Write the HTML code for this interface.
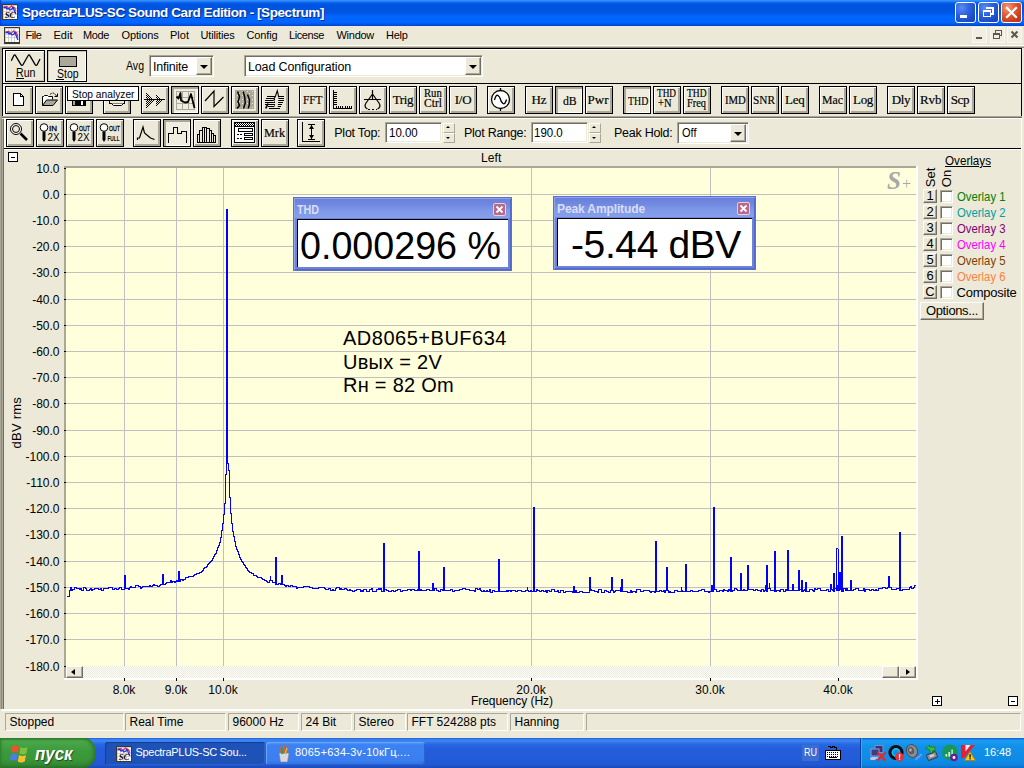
<!DOCTYPE html>
<html><head><meta charset="utf-8"><title>SpectraPLUS</title><style>
*{box-sizing:border-box;margin:0;padding:0}
html,body{width:1024px;height:768px;overflow:hidden;background:#ece9d8;font-family:"Liberation Sans",sans-serif;font-size:13px;color:#000}
.a{position:absolute}
.t{position:absolute;white-space:nowrap;line-height:1}
.btn{position:absolute;width:28px;height:28px;border:1px solid #000;background:#ece9d8;box-shadow:inset 1px 1px 0 #fff,inset -2px -2px 0 #aca899}
.btn.p{box-shadow:inset 2px 2px 0 #aca899,inset -1px -1px 0 #fff;background:#efede0}
.btn svg{position:absolute;left:0;top:0}
.btn .s{position:absolute;left:0;top:0;width:26px;height:26px;text-align:center;font-family:"Liberation Serif",serif;font-size:13px;line-height:26px;white-space:nowrap;letter-spacing:0}
.btn .s2{position:absolute;left:0;top:2px;width:26px;text-align:center;font-family:"Liberation Serif",serif;font-size:11px;line-height:10px;white-space:nowrap}
.sunk{position:absolute;background:#fff;border:1px solid;border-color:#aca899 #fff #fff #aca899;box-shadow:inset 1px 1px 0 #716f64,inset -1px -1px 0 #ece9d8}
.dd{position:absolute;background:#ece9d8;border:1px solid;border-color:#fff #716f64 #716f64 #fff;box-shadow:inset -1px -1px 0 #aca899}
.dd:after{content:"";position:absolute;left:50%;top:50%;margin:-1px 0 0 -4px;border:4px solid transparent;border-top-color:#000;border-bottom:0}
.sp{position:absolute;border:1px solid #aca899;background:#ece9d8}
.yl{position:absolute;right:964.5px;white-space:nowrap;line-height:12px;height:12px;font-size:12px}
.xl{position:absolute;top:683.5px;width:60px;text-align:center;line-height:12px;font-size:12px}
.st{position:absolute;top:713px;height:18px;border:1px solid;border-color:#aca899 #fff #fff #aca899;padding-left:3.5px;line-height:16px;font-size:12px;white-space:nowrap}
.ov{position:absolute;left:956px;font-size:13px;line-height:14px;white-space:nowrap;letter-spacing:-0.3px}
.sb{position:absolute;left:923px;width:14px;height:14px;border:1px solid;border-color:#fff #716f64 #716f64 #fff;box-shadow:inset -1px -1px 0 #aca899;font-size:13px;line-height:12px;text-align:center}
.cb{position:absolute;left:940px;width:13px;height:13px;background:#fff;border:1px solid;border-color:#aca899 #fff #fff #aca899;box-shadow:inset 1px 1px 0 #716f64,inset -1px -1px 0 #ece9d8}
.mini{position:absolute;width:10px;height:10px;border:1px solid #000;background:#fff}
</style></head><body>
<div class="a" style="left:0;top:0;width:1024px;height:26px;background:linear-gradient(to bottom,#3d95ff 0,#2a85fb 4%,#0a64ee 10%,#0055e0 16%,#0054e0 45%,#005cee 55%,#0066ff 62%,#0066ff 86%,#0058ee 92%,#0044d0 100%)"></div>
<div class="t" style="left:22px;top:6px;font-size:13.5px;font-weight:bold;color:#fff;text-shadow:1px 1px 0 #0a2a80;letter-spacing:-0.43px" id="ttl">SpectraPLUS-SC Sound Card Edition - [Spectrum]</div>
<svg class="a" style="left:2px;top:4px" width="16" height="16" viewBox="0 0 16 16" shape-rendering="crispEdges"><rect width="16" height="16" fill="#3c3a30"/><rect x="1" y="1" width="14" height="14" fill="#d0d0d0"/><rect x="2" y="2" width="2" height="2" fill="#fff"/><rect x="2" y="5" width="2" height="2" fill="#fff"/><rect x="2" y="8" width="2" height="2" fill="#fff"/><rect x="2" y="11" width="2" height="2" fill="#fff"/><rect x="2" y="13" width="2" height="2" fill="#fff"/><rect x="5" y="2" width="2" height="2" fill="#fff"/><rect x="5" y="5" width="2" height="2" fill="#fff"/><rect x="5" y="8" width="2" height="2" fill="#fff"/><rect x="5" y="11" width="2" height="2" fill="#fff"/><rect x="5" y="13" width="2" height="2" fill="#fff"/><rect x="8" y="2" width="2" height="2" fill="#fff"/><rect x="8" y="5" width="2" height="2" fill="#fff"/><rect x="8" y="8" width="2" height="2" fill="#fff"/><rect x="8" y="11" width="2" height="2" fill="#fff"/><rect x="8" y="13" width="2" height="2" fill="#fff"/><rect x="11" y="2" width="2" height="2" fill="#fff"/><rect x="11" y="5" width="2" height="2" fill="#fff"/><rect x="11" y="8" width="2" height="2" fill="#fff"/><rect x="11" y="11" width="2" height="2" fill="#fff"/><rect x="11" y="13" width="2" height="2" fill="#fff"/><rect x="13" y="2" width="2" height="2" fill="#fff"/><rect x="13" y="5" width="2" height="2" fill="#fff"/><rect x="13" y="8" width="2" height="2" fill="#fff"/><rect x="13" y="11" width="2" height="2" fill="#fff"/><rect x="13" y="13" width="2" height="2" fill="#fff"/><polyline points="1.500,3 5,2.500 6,4 8,3.500 9.500,2 11,4 12.500,3.500 14,7" fill="none" stroke="#f03040" stroke-width="1.200" shape-rendering="auto"/><polyline points="1.500,3.500 4,3.500 5,5 7,4.500 8,6 10,5 11,3 12.500,7 14,10" fill="none" stroke="#2030f0" stroke-width="1.300" shape-rendering="auto"/><text x="2.800" y="14.300" font-family="Liberation Serif" font-style="italic" font-weight="bold" font-size="8.500" fill="#000" shape-rendering="auto" textLength="10.500" lengthAdjust="spacingAndGlyphs">SC</text></svg>
<div class="a" style="left:0;top:0;width:2px;height:26px;background:linear-gradient(to right,#0838c8,rgba(8,56,200,0))"></div>
<div class="a" style="left:955px;top:2px;width:21px;height:21px;border:1px solid #fff;border-radius:3px;background:radial-gradient(circle at 30% 25%,#5a8cf5 0,#2c62e0 40%,#1a48c4 80%,#1640b8 100%)"><div class="a" style="left:4px;top:12px;width:7px;height:3px;background:#fff"></div></div><div class="a" style="left:978px;top:2px;width:21px;height:21px;border:1px solid #fff;border-radius:3px;background:radial-gradient(circle at 30% 25%,#5a8cf5 0,#2c62e0 40%,#1a48c4 80%,#1640b8 100%)"><svg class="a" style="left:0;top:0" width="19" height="19" shape-rendering="crispEdges"><path d="M7 4.5h7v1M13.5 5v5.5h-1.5" fill="none" stroke="#fff" stroke-width="2"/><rect x="4.5" y="8" width="7" height="5.5" fill="none" stroke="#fff" stroke-width="1"/><rect x="4" y="7" width="8" height="2" fill="#fff"/></svg></div><div class="a" style="left:1001px;top:2px;width:21px;height:21px;border:1px solid #fff;border-radius:3px;background:radial-gradient(circle at 30% 25%,#f0a080 0,#e0603c 35%,#c83a18 75%,#b03010 100%)"><svg class="a" style="left:0;top:0" width="19" height="19"><path d="M5 5l9 9M14 5l-9 9" stroke="#fff" stroke-width="2.2" stroke-linecap="square"/></svg></div>
<svg class="a" style="left:4px;top:27px" width="16" height="17" viewBox="0 0 16 17" shape-rendering="crispEdges"><rect width="16" height="17" fill="#3c3a30"/><rect x="1" y="1" width="14" height="14" fill="#d0d0d0"/><rect x="2" y="2" width="2" height="2" fill="#fff"/><rect x="2" y="5" width="2" height="2" fill="#fff"/><rect x="2" y="8" width="2" height="2" fill="#fff"/><rect x="2" y="11" width="2" height="2" fill="#fff"/><rect x="2" y="13" width="2" height="2" fill="#fff"/><rect x="5" y="2" width="2" height="2" fill="#fff"/><rect x="5" y="5" width="2" height="2" fill="#fff"/><rect x="5" y="8" width="2" height="2" fill="#fff"/><rect x="5" y="11" width="2" height="2" fill="#fff"/><rect x="5" y="13" width="2" height="2" fill="#fff"/><rect x="8" y="2" width="2" height="2" fill="#fff"/><rect x="8" y="5" width="2" height="2" fill="#fff"/><rect x="8" y="8" width="2" height="2" fill="#fff"/><rect x="8" y="11" width="2" height="2" fill="#fff"/><rect x="8" y="13" width="2" height="2" fill="#fff"/><rect x="11" y="2" width="2" height="2" fill="#fff"/><rect x="11" y="5" width="2" height="2" fill="#fff"/><rect x="11" y="8" width="2" height="2" fill="#fff"/><rect x="11" y="11" width="2" height="2" fill="#fff"/><rect x="11" y="13" width="2" height="2" fill="#fff"/><rect x="13" y="2" width="2" height="2" fill="#fff"/><rect x="13" y="5" width="2" height="2" fill="#fff"/><rect x="13" y="8" width="2" height="2" fill="#fff"/><rect x="13" y="11" width="2" height="2" fill="#fff"/><rect x="13" y="13" width="2" height="2" fill="#fff"/><polyline points="1.500,5 5,4.500 6,6 8,5.500 9.500,4 11,6 12.500,5.500 14,10" fill="none" stroke="#f03040" stroke-width="1.200" shape-rendering="auto"/><polyline points="1.500,5.500 4,5.500 5,7 7,6.500 8,8 10,7 11,5 12.500,9.500 14,13" fill="none" stroke="#2030f0" stroke-width="1.300" shape-rendering="auto"/></svg>
<div class="t" style="left:25.5px;top:30px;font-size:11px;letter-spacing:-0.431px;font-family:'Liberation Sans',sans-serif;color:#000;">File</div>
<div class="t" style="left:53.5px;top:30px;font-size:11px;letter-spacing:0.011px;font-family:'Liberation Sans',sans-serif;color:#000;">Edit</div>
<div class="t" style="left:83px;top:30px;font-size:11px;letter-spacing:-0.379px;font-family:'Liberation Sans',sans-serif;color:#000;">Mode</div>
<div class="t" style="left:121.5px;top:30px;font-size:11px;letter-spacing:-0.130px;font-family:'Liberation Sans',sans-serif;color:#000;">Options</div>
<div class="t" style="left:170px;top:30px;font-size:11px;letter-spacing:0.011px;font-family:'Liberation Sans',sans-serif;color:#000;">Plot</div>
<div class="t" style="left:200.5px;top:30px;font-size:11px;letter-spacing:-0.161px;font-family:'Liberation Sans',sans-serif;color:#000;">Utilities</div>
<div class="t" style="left:246.5px;top:30px;font-size:11px;letter-spacing:-0.133px;font-family:'Liberation Sans',sans-serif;color:#000;">Config</div>
<div class="t" style="left:289px;top:30px;font-size:11px;letter-spacing:-0.416px;font-family:'Liberation Sans',sans-serif;color:#000;">License</div>
<div class="t" style="left:336.5px;top:30px;font-size:11px;letter-spacing:-0.270px;font-family:'Liberation Sans',sans-serif;color:#000;">Window</div>
<div class="t" style="left:386px;top:30px;font-size:11px;letter-spacing:-0.280px;font-family:'Liberation Sans',sans-serif;color:#000;">Help</div>
<div class="a" style="left:972px;top:27px;width:15px;height:16px;border:1px solid #f8f7f0;background:#f1efe4"><div class="a" style="left:3px;top:9px;width:6px;height:2px;background:#5a584c"></div></div>
<div class="a" style="left:990px;top:27px;width:15px;height:16px;border:1px solid #f8f7f0;background:#f1efe4"><svg class="a" style="left:0;top:0" width="13" height="13" shape-rendering="crispEdges"><path d="M4.5 4.5v-2h6v5h-2" fill="none" stroke="#5a584c"/><rect x="4" y="2" width="7" height="1" fill="#5a584c"/><rect x="2.5" y="5.500" width="6" height="5" fill="none" stroke="#5a584c"/><rect x="2" y="5" width="7" height="2" fill="#5a584c"/></svg></div>
<div class="a" style="left:1007px;top:27px;width:15px;height:16px;border:1px solid #f8f7f0;background:#f1efe4"><svg class="a" style="left:0;top:0" width="13" height="13"><path d="M3.5 3.500l6 6M9.500 3.500l-6 6" stroke="#5a584c" stroke-width="2"/></svg></div>
<div class="a" style="left:0;top:45px;width:1024px;height:1px;background:#fff"></div>
<div class="a" style="left:0;top:46px;width:1024px;height:1px;background:#c5c2b2"></div>
<div class="a" style="left:0;top:47px;width:1024px;height:1px;background:#8e8b7c"></div>
<div class="a" style="left:0;top:47px;width:2px;height:662px;background:#aca899"></div>
<div class="a" style="left:1px;top:119px;width:1px;height:590px;background:#8e8b7c"></div>
<div class="a" style="left:2px;top:119px;width:1px;height:590px;background:#aca899"></div>
<div class="a" style="left:3px;top:119px;width:1px;height:590px;background:#716f64"></div>
<div class="a" style="left:2px;top:48px;width:1020px;height:36px;border:1px solid #000;box-shadow:inset 2px 1px 0 #fffdf0"></div>
<div class="a" style="left:2px;top:84px;width:1020px;height:32px;border-left:1px solid #000;border-right:1px solid #000;box-shadow:inset 2px 0 0 #fffdf0"></div>
<div class="a" style="left:2px;top:116px;width:1020px;height:1px;background:#aca899"></div>
<div class="a" style="left:2px;top:117px;width:1020px;height:1px;background:#716f64"></div>
<div class="a" style="left:4px;top:118px;width:1018px;height:1px;background:#fff"></div>
<div class="a" style="left:4px;top:119px;width:2px;height:29px;background:#fffdf0"></div>
<div class="a" style="left:4px;top:148px;width:1017px;height:1px;background:#000"></div>
<div class="a" style="left:4px;top:149px;width:1017px;height:1px;background:#fff"></div>
<div class="a" style="left:1021px;top:119px;width:1px;height:592px;background:#fff"></div>
<div class="btn" style="left:5px;top:50px;width:40px;height:32px;box-shadow:inset 1px 1px 0 #fff,inset -1px -1px 0 #c8c5b2"><svg style="left:-1px;top:-1px" width="40" height="32"><path d="M6.300 10.800 L8.700 5.800 Q9.700 3.800 10.700 5.800 L15.800 14.300 Q17 16.300 18.200 14.300 L23 5.800 Q24 3.800 25 5.800 L30 14.300 Q31.200 16.300 32.400 14.300 L35 9" fill="none" stroke="#000" stroke-width="1.300" stroke-linejoin="round"/></svg></div>
<div class="t" style="left:16px;top:67px;font-size:12px;letter-spacing:0.000px;font-family:'Liberation Sans',sans-serif;color:#000;transform:scaleX(0.8813);transform-origin:0 0;">Run</div>
<div class="a" style="left:16px;top:78px;width:8px;height:1px;background:#000"></div>
<div class="btn p" style="left:47px;top:50px;width:40px;height:32px;box-shadow:inset 1px 1px 0 #c8c5b2,inset -1px -1px 0 #fff"><div class="a" style="left:11px;top:5px;width:18px;height:11px;border:1px solid #000;background:#aca899"></div></div>
<div class="t" style="left:56.5px;top:68px;font-size:12px;letter-spacing:0.000px;font-family:'Liberation Sans',sans-serif;color:#000;transform:scaleX(0.8750);transform-origin:0 0;">Stop</div>
<div class="a" style="left:56px;top:79px;width:8px;height:1px;background:#000"></div>
<div class="t" style="left:126.4px;top:60px;font-size:12.5px;letter-spacing:0.000px;font-family:'Liberation Sans',sans-serif;color:#000;transform:scaleX(0.8446);transform-origin:0 0;">Avg</div>
<div class="sunk" style="left:149px;top:55px;width:65px;height:22px"><div class="dd" style="left:46px;top:1px;width:16px;height:18px"></div></div>
<div class="sunk" style="left:244px;top:55px;width:239px;height:22px"><div class="dd" style="left:220px;top:1px;width:16px;height:18px"></div></div>
<div class="t" style="left:153px;top:61px;font-size:12.5px;letter-spacing:-0.229px;font-family:'Liberation Sans',sans-serif;color:#000;">Infinite</div>
<div class="t" style="left:248px;top:61px;font-size:12.5px;letter-spacing:-0.146px;font-family:'Liberation Sans',sans-serif;color:#000;">Load Configuration</div>
<div class="btn" style="left:5px;top:86px"><svg style="left:-1px;top:-1px" width="28" height="28" viewBox="0 0 28 28"><path d="M8.5 7.500h7l3 3v9h-10z" fill="#fff" stroke="#000" shape-rendering="crispEdges"/><path d="M15.5 7.500v3h3" stroke="#000" fill="none" shape-rendering="crispEdges"/></svg></div>
<div class="btn" style="left:35px;top:86px"><svg style="left:-1px;top:-1px" width="28" height="28" viewBox="0 0 28 28"><path d="M7.5 19.500v-9h1l1-1h3l1 1h4v3" fill="#fff" stroke="#000" stroke-width="1"/><path d="M7.5 19.500l4-5.500h11l-4.500 5.500z" fill="#aca899" stroke="#000"/><path d="M15 8.500q3.500-3.500 6.500 1.500" stroke="#000" fill="none" stroke-dasharray="2 1"/><path d="M19.500 10.500h3v-3" stroke="#000" fill="none"/></svg></div>
<div class="btn" style="left:65px;top:86px"><svg style="left:-1px;top:-1px" width="28" height="28" viewBox="0 0 28 28"><rect x="7.500" y="7.500" width="13" height="12" fill="#000" stroke="#000" shape-rendering="crispEdges"/><rect x="10" y="8" width="8" height="5" fill="#fff" shape-rendering="crispEdges"/><rect x="8" y="15" width="2" height="4" fill="#aca899" shape-rendering="crispEdges"/><rect x="16" y="15" width="2" height="4" fill="#fff" shape-rendering="crispEdges"/></svg></div>
<div class="btn" style="left:103px;top:86px"><svg style="left:-1px;top:-1px" width="28" height="28" viewBox="0 0 28 28"><path d="M9.500 12.500v-5h9v5" fill="#fff" stroke="#000" shape-rendering="crispEdges"/><rect x="6.500" y="12.500" width="15" height="5" fill="#ece9d8" stroke="#000" shape-rendering="crispEdges"/><path d="M8.500 17.500l2 2h8l2-2" fill="#fff" stroke="#000"/><rect x="17" y="14" width="2" height="1" fill="#aca899"/></svg></div>
<div class="btn" style="left:141px;top:86px"><svg style="left:-1px;top:-1px" width="28" height="28" viewBox="0 0 28 28"><defs><pattern id="chk" width="2" height="2" patternUnits="userSpaceOnUse"><rect width="1" height="1" fill="#000"/><rect x="1" y="1" width="1" height="1" fill="#000"/></pattern><pattern id="chk2" width="2" height="2" patternUnits="userSpaceOnUse"><rect width="2" height="2" fill="#aca899"/><rect width="1" height="1" fill="#ece9d8"/></pattern></defs><g shape-rendering="crispEdges"><path d="M5 5v18l8-9z" fill="url(#chk)"/><path d="M15 7v14l6-7z" fill="url(#chk)"/><rect x="3" y="13" width="21" height="1" fill="#000"/></g></svg></div>
<div class="btn p" style="left:171px;top:86px"><svg style="left:-1px;top:-1px" width="28" height="28" viewBox="0 0 28 28"><g shape-rendering="crispEdges"><rect x="5" y="5" width="1" height="19" fill="#aca899"/><rect x="5" y="5" width="19" height="1" fill="#aca899"/><rect x="11" y="5" width="1" height="19" fill="#aca899"/><rect x="5" y="11" width="19" height="1" fill="#aca899"/><rect x="17" y="5" width="1" height="19" fill="#aca899"/><rect x="5" y="17" width="19" height="1" fill="#aca899"/><rect x="23" y="5" width="1" height="19" fill="#aca899"/><rect x="5" y="23" width="19" height="1" fill="#aca899"/></g><path d="M5.500 10.500l2 2 2-5.500.5 7.500 4 2 3-.5 3-8 1.500 6 2 8" stroke="#000" fill="none" stroke-width="1.800" stroke-linejoin="round"/></svg></div>
<div class="btn" style="left:201px;top:86px"><svg style="left:-1px;top:-1px" width="28" height="28" viewBox="0 0 28 28"><path d="M4 15l9-10v15.500l9.500-9.500" stroke="#000" fill="none" stroke-width="1.200"/></svg></div>
<div class="btn" style="left:231px;top:86px"><svg style="left:-1px;top:-1px" width="28" height="28" viewBox="0 0 28 28"><defs><pattern id="wf" width="5" height="4" patternUnits="userSpaceOnUse"><rect width="5" height="4" fill="#aca899"/><rect x="1" y="1" width="1" height="1" fill="#ece9d8"/><rect x="3" y="3" width="1" height="1" fill="#ece9d8"/></pattern></defs><rect x="4" y="4" width="19" height="19" fill="url(#wf)" shape-rendering="crispEdges"/><path d="M6.500 5.500l2 5-1.500 5.500 1.500 3.500-2.500 3M12.200 5.500l1.500 5.500.5 6-1.700 5.500M16.500 8.500l2 5-.3 6-1.200 3" stroke="#000" fill="none" stroke-width="1.500" stroke-linejoin="round"/></svg></div>
<div class="btn" style="left:261px;top:86px"><svg style="left:-1px;top:-1px" width="28" height="28" viewBox="0 0 28 28"><g shape-rendering="crispEdges"><rect x="6" y="10" width="17" height="1" fill="#000"/><rect x="5" y="12" width="18" height="1" fill="#000"/><rect x="4" y="14" width="18.5" height="1" fill="#000"/><rect x="4" y="16" width="18" height="1" fill="#000"/><rect x="4" y="18" width="17" height="1" fill="#000"/><rect x="7" y="20" width="12.5" height="1" fill="#000"/><rect x="7.5" y="22" width="11.5" height="1" fill="#000"/></g><path d="M13 21.500l-.3-9 1.800-2.500 1.800-5.300.8 3.300.5 3 -1 11z" fill="#ece9d8"/><path d="M12.700 13.500l1.800-3.500 1.800-5.300.8 3.300.6 3.500" stroke="#000" fill="none" stroke-width="1.100"/><path d="M13.500 13v8" stroke="#000" stroke-width="1" stroke-dasharray="1.500 1"/><path d="M4.800 22.500l2.200-5" stroke="#000" stroke-width="1.800"/></svg></div>
<div class="btn" style="left:299px;top:86px"></div><div class="t" style="left:302.6px;top:93.08px;font-size:13px;letter-spacing:0.000px;font-family:'Liberation Serif',serif;color:#000;transform:scaleX(0.8705);transform-origin:0 0;-webkit-text-stroke:0.18px #000;">FFT</div>
<div class="btn" style="left:329px;top:86px"><svg style="left:-1px;top:-1px" width="28" height="28" viewBox="0 0 28 28"><g shape-rendering="crispEdges"><rect x="4" y="4" width="1" height="19" fill="#000"/><rect x="4" y="22" width="19" height="1" fill="#000"/><rect x="22" y="20" width="1" height="3" fill="#000"/><rect x="5" y="6" width="3" height="1" fill="#000"/><rect x="7" y="20" width="1" height="3" fill="#000"/><rect x="5" y="8" width="3" height="1" fill="#000"/><rect x="9" y="20" width="1" height="3" fill="#000"/><rect x="5" y="10" width="3" height="1" fill="#000"/><rect x="11" y="20" width="1" height="3" fill="#000"/><rect x="5" y="12" width="3" height="1" fill="#000"/><rect x="13" y="20" width="1" height="3" fill="#000"/><rect x="5" y="14" width="3" height="1" fill="#000"/><rect x="16" y="20" width="1" height="3" fill="#000"/><rect x="5" y="16" width="3" height="1" fill="#000"/><rect x="18" y="20" width="1" height="3" fill="#000"/><rect x="5" y="18" width="3" height="1" fill="#000"/><rect x="20" y="20" width="1" height="3" fill="#000"/></g></svg></div>
<div class="btn" style="left:359px;top:86px"><svg style="left:-1px;top:-1px" width="28" height="28" viewBox="0 0 28 28"><path d="M13.500 4v10M5 13.500h17M13.500 8l-6.500 9q-2.500 4 1.500 6M13.500 8l6.500 9q2.500 4-1.500 6" stroke="#000" fill="none" stroke-width="1.200"/><path d="M9 23.500h9" stroke="#000" fill="none" stroke-dasharray="2 2"/></svg></div>
<div class="btn" style="left:389px;top:86px"></div><div class="t" style="left:392.8px;top:93.08px;font-size:13px;letter-spacing:-0.407px;font-family:'Liberation Serif',serif;color:#000;-webkit-text-stroke:0.18px #000;">Trig</div>
<div class="btn" style="left:419px;top:86px"></div><div class="t" style="left:424.1px;top:87.84px;font-size:11.5px;letter-spacing:0.000px;font-family:'Liberation Serif',serif;color:#000;transform:scaleX(0.9285);transform-origin:0 0;-webkit-text-stroke:0.18px #000;">Run</div><div class="t" style="left:424.1px;top:98.14px;font-size:11.5px;letter-spacing:-0.023px;font-family:'Liberation Serif',serif;color:#000;-webkit-text-stroke:0.18px #000;">Ctrl</div>
<div class="btn" style="left:449px;top:86px"></div><div class="t" style="left:454.8px;top:93.08px;font-size:13px;letter-spacing:-0.277px;font-family:'Liberation Serif',serif;color:#000;-webkit-text-stroke:0.18px #000;">I/O</div>
<div class="btn" style="left:487px;top:86px"><svg style="left:-1px;top:-1px" width="28" height="28" viewBox="0 0 28 28"><circle cx="13.500" cy="13.500" r="9" fill="#fff" stroke="#000" stroke-width="1.300"/><path d="M13.500 2v3M13.500 22v3" stroke="#000" stroke-width="1.300"/><path d="M7.500 14q1.500-6 3.500-4.500t2.500 4 2.500 4 3.500-4" stroke="#000" fill="none" stroke-width="1.300"/></svg></div>
<div class="btn" style="left:525px;top:86px"></div><div class="t" style="left:531.5px;top:93.08px;font-size:13px;letter-spacing:-0.079px;font-family:'Liberation Serif',serif;color:#000;-webkit-text-stroke:0.18px #000;">Hz</div>
<div class="btn p" style="left:555px;top:86px"></div><div class="t" style="left:562.8px;top:94.08px;font-size:13px;letter-spacing:0.000px;font-family:'Liberation Serif',serif;color:#000;transform:scaleX(0.9031);transform-origin:0 0;-webkit-text-stroke:0.18px #000;">dB</div>
<div class="btn" style="left:585px;top:86px"></div><div class="t" style="left:587.5px;top:93.08px;font-size:13px;letter-spacing:0.018px;font-family:'Liberation Serif',serif;color:#000;-webkit-text-stroke:0.18px #000;">Pwr</div>
<div class="btn p" style="left:623px;top:86px"></div><div class="t" style="left:628px;top:94.08px;font-size:13px;letter-spacing:0.000px;font-family:'Liberation Serif',serif;color:#000;transform:scaleX(0.7599);transform-origin:0 0;-webkit-text-stroke:0.18px #000;">THD</div>
<div class="btn" style="left:653px;top:86px"></div><div class="t" style="left:656.5px;top:87.84px;font-size:11.5px;letter-spacing:0.000px;font-family:'Liberation Serif',serif;color:#000;transform:scaleX(0.8039);transform-origin:0 0;-webkit-text-stroke:0.18px #000;">THD</div><div class="t" style="left:658px;top:98.14px;font-size:11.5px;letter-spacing:0.000px;font-family:'Liberation Serif',serif;color:#000;transform:scaleX(0.9127);transform-origin:0 0;-webkit-text-stroke:0.18px #000;">+N</div>
<div class="btn" style="left:683px;top:86px"></div><div class="t" style="left:686.7px;top:87.84px;font-size:11.5px;letter-spacing:0.000px;font-family:'Liberation Serif',serif;color:#000;transform:scaleX(0.8251);transform-origin:0 0;-webkit-text-stroke:0.18px #000;">THD</div><div class="t" style="left:687px;top:98.14px;font-size:11.5px;letter-spacing:0.000px;font-family:'Liberation Serif',serif;color:#000;transform:scaleX(0.9013);transform-origin:0 0;-webkit-text-stroke:0.18px #000;">Freq</div>
<div class="btn" style="left:721px;top:86px"></div><div class="t" style="left:724.5px;top:93.08px;font-size:13px;letter-spacing:0.000px;font-family:'Liberation Serif',serif;color:#000;transform:scaleX(0.8229);transform-origin:0 0;-webkit-text-stroke:0.18px #000;">IMD</div>
<div class="btn" style="left:751px;top:86px"></div><div class="t" style="left:753.4px;top:93.08px;font-size:13px;letter-spacing:0.000px;font-family:'Liberation Serif',serif;color:#000;transform:scaleX(0.8700);transform-origin:0 0;-webkit-text-stroke:0.18px #000;">SNR</div>
<div class="btn" style="left:781px;top:86px"></div><div class="t" style="left:785px;top:93.08px;font-size:13px;letter-spacing:-0.170px;font-family:'Liberation Serif',serif;color:#000;-webkit-text-stroke:0.18px #000;">Leq</div>
<div class="btn" style="left:819px;top:86px"></div><div class="t" style="left:822px;top:93.08px;font-size:13px;letter-spacing:0.000px;font-family:'Liberation Serif',serif;color:#000;transform:scaleX(0.9091);transform-origin:0 0;-webkit-text-stroke:0.18px #000;">Mac</div>
<div class="btn" style="left:849px;top:86px"></div><div class="t" style="left:853px;top:93.08px;font-size:13px;letter-spacing:-0.314px;font-family:'Liberation Serif',serif;color:#000;-webkit-text-stroke:0.18px #000;">Log</div>
<div class="btn" style="left:887px;top:86px"></div><div class="t" style="left:891.8px;top:93.08px;font-size:13px;letter-spacing:-0.400px;font-family:'Liberation Serif',serif;color:#000;-webkit-text-stroke:0.18px #000;">Dly</div>
<div class="btn" style="left:917px;top:86px"></div><div class="t" style="left:920px;top:93.08px;font-size:13px;letter-spacing:-0.090px;font-family:'Liberation Serif',serif;color:#000;-webkit-text-stroke:0.18px #000;">Rvb</div>
<div class="btn" style="left:947px;top:86px"></div><div class="t" style="left:950.7px;top:93.08px;font-size:13px;letter-spacing:-0.400px;font-family:'Liberation Serif',serif;color:#000;-webkit-text-stroke:0.18px #000;">Scp</div>
<div class="a" style="left:67px;top:86px;width:72px;height:15px;border:1px solid #000;background:#fff"></div>
<div class="t" style="left:72px;top:89px;font-size:11.5px;letter-spacing:0.000px;font-family:'Liberation Sans',sans-serif;color:#000;transform:scaleX(0.8888);transform-origin:0 0;">Stop analyzer</div>
<div class="btn" style="left:6px;top:119px"><svg style="left:-1px;top:-1px" width="28" height="28" viewBox="0 0 28 28"><circle cx="10" cy="10" r="5.500" fill="#fff" stroke="#000"/><circle cx="10" cy="10" r="3.500" fill="#ece9d8" stroke="#000"/><path d="M14.500 14.500l6.500 6.500" stroke="#000" stroke-width="2.600"/></svg></div>
<div class="btn" style="left:36px;top:119px"><svg style="left:-1px;top:-1px" width="28" height="28" viewBox="0 0 28 28"><circle cx="8" cy="8.500" r="3.800" fill="#fff" stroke="#000"/><path d="M6.500 12.500h3v8l-1.500 2.500-1.500-2.500z" fill="#000"/><text x="13" y="11.500" font-family="Liberation Sans" font-size="8" textLength="8" lengthAdjust="spacingAndGlyphs" stroke="#000" stroke-width=".3">IN</text><text x="11.500" y="22" font-family="Liberation Sans" font-size="11" textLength="12" lengthAdjust="spacingAndGlyphs">2X</text></svg></div>
<div class="btn" style="left:66px;top:119px"><svg style="left:-1px;top:-1px" width="28" height="28" viewBox="0 0 28 28"><circle cx="8" cy="8.500" r="3.800" fill="#fff" stroke="#000"/><path d="M6.500 12.500h3v8l-1.500 2.500-1.500-2.500z" fill="#000"/><text x="13" y="11.500" font-family="Liberation Sans" font-size="8" textLength="11" lengthAdjust="spacingAndGlyphs" stroke="#000" stroke-width=".3">OUT</text><text x="11.500" y="22" font-family="Liberation Sans" font-size="11" textLength="12" lengthAdjust="spacingAndGlyphs">2X</text></svg></div>
<div class="btn" style="left:96px;top:119px"><svg style="left:-1px;top:-1px" width="28" height="28" viewBox="0 0 28 28"><circle cx="8" cy="8.500" r="3.800" fill="#fff" stroke="#000"/><path d="M6.500 12.500h3v8l-1.500 2.500-1.500-2.500z" fill="#000"/><text x="13" y="11.500" font-family="Liberation Sans" font-size="8" textLength="11" lengthAdjust="spacingAndGlyphs" stroke="#000" stroke-width=".3">OUT</text><text x="11.500" y="22" font-family="Liberation Sans" font-size="7.500" font-weight="bold" textLength="12" lengthAdjust="spacingAndGlyphs">FULL</text></svg></div>
<div class="btn" style="left:133px;top:119px"><svg style="left:-1px;top:-1px" width="28" height="28" viewBox="0 0 28 28"><path d="M4.500 21v-2h2l3.500-11 1.500 6 3 2.500 3 2.500 4 1.500" stroke="#000" fill="none" stroke-width="1.200"/></svg></div>
<div class="btn p" style="left:163px;top:119px"><svg style="left:-1px;top:-1px" width="28" height="28" viewBox="0 0 28 28"><path d="M5.500 23.500v-9h4.500v-6h4.500v6h4v-2h4.500v11" stroke="#000" fill="none" shape-rendering="crispEdges"/></svg></div>
<div class="btn" style="left:193px;top:119px"><svg style="left:-1px;top:-1px" width="28" height="28" viewBox="0 0 28 28"><g shape-rendering="crispEdges"><rect x="4.5" y="15.5" width="2.300" height="8" fill="none" stroke="#000"/><rect x="6.8" y="11.5" width="2.300" height="12" fill="none" stroke="#000"/><rect x="9.1" y="8.5" width="2.300" height="15" fill="none" stroke="#000"/><rect x="11.4" y="8.5" width="2.300" height="15" fill="none" stroke="#000"/><rect x="13.7" y="9.5" width="2.300" height="14" fill="none" stroke="#000"/><rect x="16" y="11.5" width="2.300" height="12" fill="none" stroke="#000"/><rect x="18.3" y="14.5" width="2.300" height="9" fill="none" stroke="#000"/><rect x="20.6" y="16.5" width="2.300" height="7" fill="none" stroke="#000"/></g></svg></div>
<div class="btn" style="left:231px;top:119px"><svg style="left:-1px;top:-1px" width="28" height="28" viewBox="0 0 28 28"><g shape-rendering="crispEdges"><rect x="3.500" y="3.500" width="20" height="20" fill="#fff" stroke="#000"/><rect x="4" y="4" width="19" height="3" fill="url(#chk)"/><rect x="3" y="7" width="21" height="1" fill="#000"/><rect x="7.500" y="9.500" width="14" height="3" fill="#fff" stroke="#000"/><rect x="13.500" y="14.500" width="8" height="2" fill="#fff" stroke="#000"/><rect x="13.500" y="18.500" width="8" height="2" fill="#fff" stroke="#000"/><rect x="6" y="15" width="2" height="1" fill="#000"/><rect x="9" y="15" width="2" height="1" fill="#000"/><rect x="6" y="19" width="2" height="1" fill="#000"/><rect x="9" y="19" width="2" height="1" fill="#000"/></g></svg></div>
<div class="btn" style="left:261px;top:119px"></div><div class="t" style="left:263.5px;top:126.08px;font-size:13px;letter-spacing:0.000px;font-family:'Liberation Serif',serif;color:#000;transform:scaleX(0.9380);transform-origin:0 0;-webkit-text-stroke:0.18px #000;">Mrk</div>
<div class="btn" style="left:297px;top:119px"><svg style="left:-1px;top:-1px" width="28" height="28" viewBox="0 0 28 28"><g shape-rendering="crispEdges"><path d="M5.500 3v19.500h17" stroke="#000" fill="none"/><path d="M11 5.500h7M11 20.500h7M14.500 6v14" stroke="#000" fill="none"/></g><path d="M14.500 6l-2.500 4h5zM14.500 20l-2.500-4h5z" fill="#000"/></svg></div>
<div class="t" style="left:334.3px;top:127px;font-size:12.5px;letter-spacing:-0.268px;font-family:'Liberation Sans',sans-serif;color:#000;">Plot Top:</div>
<div class="sunk" style="left:385px;top:122px;width:57px;height:21px"></div>
<div class="sp2" id="sp1"></div>
<div class="t" style="left:464px;top:127px;font-size:12.5px;letter-spacing:-0.256px;font-family:'Liberation Sans',sans-serif;color:#000;">Plot Range:</div>
<div class="sunk" style="left:531px;top:122px;width:57px;height:21px"></div>
<div class="t" style="left:614px;top:127px;font-size:12.5px;letter-spacing:-0.264px;font-family:'Liberation Sans',sans-serif;color:#000;">Peak Hold:</div>
<div class="sunk" style="left:677px;top:122px;width:72px;height:22px"><div class="dd" style="left:52px;top:1px;width:16px;height:18px"></div></div>
<div class="a" style="left:443px;top:123px;width:12px;height:10px;background:#ece9d8;border:1px solid;border-color:#fff #aca899 #aca899 #fff"><div class="a" style="left:2px;top:2px;border:2.5px solid transparent;border-bottom:2.5px solid #000;border-top:0"></div></div>
<div class="a" style="left:443px;top:133px;width:12px;height:10px;background:#ece9d8;border:1px solid;border-color:#fff #aca899 #aca899 #fff"><div class="a" style="left:2px;top:3px;border:2.5px solid transparent;border-top:2.5px solid #000;border-bottom:0"></div></div>
<div class="a" style="left:589px;top:123px;width:12px;height:10px;background:#ece9d8;border:1px solid;border-color:#fff #aca899 #aca899 #fff"><div class="a" style="left:2px;top:2px;border:2.5px solid transparent;border-bottom:2.5px solid #000;border-top:0"></div></div>
<div class="a" style="left:589px;top:133px;width:12px;height:10px;background:#ece9d8;border:1px solid;border-color:#fff #aca899 #aca899 #fff"><div class="a" style="left:2px;top:3px;border:2.5px solid transparent;border-top:2.5px solid #000;border-bottom:0"></div></div>
<div class="t" style="left:388.5px;top:127px;font-size:12.5px;letter-spacing:0.000px;font-family:'Liberation Sans',sans-serif;color:#000;transform:scaleX(0.9191);transform-origin:0 0;">10.00</div>
<div class="t" style="left:534.4px;top:127px;font-size:12.5px;letter-spacing:0.000px;font-family:'Liberation Sans',sans-serif;color:#000;transform:scaleX(0.9191);transform-origin:0 0;">190.0</div>
<div class="t" style="left:681.5px;top:127px;font-size:12.5px;letter-spacing:0.000px;font-family:'Liberation Sans',sans-serif;color:#000;transform:scaleX(0.8818);transform-origin:0 0;">Off</div>
<div class="mini" style="left:8px;top:152px"><div class="a" style="left:2px;top:4px;width:4px;height:1px;background:#000"></div></div>
<div class="t" style="left:481px;top:152px;font-size:12px;letter-spacing:0.121px;font-family:'Liberation Sans',sans-serif;color:#000;">Left</div>
<div class="a" style="left:64px;top:166px;width:854px;height:514px;background:#fff"></div>
<div class="a" style="left:64px;top:166px;width:852px;height:512px;background:#aca899"></div>
<div class="a" style="left:66px;top:168px;width:850px;height:498px;background:#ffffdc"></div>
<svg class="a" style="left:0;top:0" width="1024" height="768" shape-rendering="crispEdges"><rect x="66" y="194" width="850" height="1" fill="#c0c0c0"/><rect x="66" y="220" width="850" height="1" fill="#c0c0c0"/><rect x="66" y="246" width="850" height="1" fill="#c0c0c0"/><rect x="66" y="272" width="850" height="1" fill="#c0c0c0"/><rect x="66" y="299" width="850" height="1" fill="#c0c0c0"/><rect x="66" y="325" width="850" height="1" fill="#c0c0c0"/><rect x="66" y="351" width="850" height="1" fill="#c0c0c0"/><rect x="66" y="377" width="850" height="1" fill="#c0c0c0"/><rect x="66" y="403" width="850" height="1" fill="#c0c0c0"/><rect x="66" y="430" width="850" height="1" fill="#c0c0c0"/><rect x="66" y="456" width="850" height="1" fill="#c0c0c0"/><rect x="66" y="482" width="850" height="1" fill="#c0c0c0"/><rect x="66" y="508" width="850" height="1" fill="#c0c0c0"/><rect x="66" y="534" width="850" height="1" fill="#c0c0c0"/><rect x="66" y="561" width="850" height="1" fill="#c0c0c0"/><rect x="66" y="587" width="850" height="1" fill="#c0c0c0"/><rect x="66" y="613" width="850" height="1" fill="#c0c0c0"/><rect x="66" y="639" width="850" height="1" fill="#c0c0c0"/><rect x="124" y="168" width="1" height="498" fill="#c0c0c0"/><rect x="124" y="678" width="1" height="3" fill="#000"/><rect x="176" y="168" width="1" height="498" fill="#c0c0c0"/><rect x="176" y="678" width="1" height="3" fill="#000"/><rect x="223" y="168" width="1" height="498" fill="#c0c0c0"/><rect x="223" y="678" width="1" height="3" fill="#000"/><rect x="531" y="168" width="1" height="498" fill="#c0c0c0"/><rect x="531" y="678" width="1" height="3" fill="#000"/><rect x="710" y="168" width="1" height="498" fill="#c0c0c0"/><rect x="710" y="678" width="1" height="3" fill="#000"/><rect x="838" y="168" width="1" height="498" fill="#c0c0c0"/><rect x="838" y="678" width="1" height="3" fill="#000"/><rect x="64" y="168" width="2" height="1" fill="#000"/><rect x="64" y="194" width="2" height="1" fill="#000"/><rect x="64" y="220" width="2" height="1" fill="#000"/><rect x="64" y="246" width="2" height="1" fill="#000"/><rect x="64" y="272" width="2" height="1" fill="#000"/><rect x="64" y="299" width="2" height="1" fill="#000"/><rect x="64" y="325" width="2" height="1" fill="#000"/><rect x="64" y="351" width="2" height="1" fill="#000"/><rect x="64" y="377" width="2" height="1" fill="#000"/><rect x="64" y="403" width="2" height="1" fill="#000"/><rect x="64" y="430" width="2" height="1" fill="#000"/><rect x="64" y="456" width="2" height="1" fill="#000"/><rect x="64" y="482" width="2" height="1" fill="#000"/><rect x="64" y="508" width="2" height="1" fill="#000"/><rect x="64" y="534" width="2" height="1" fill="#000"/><rect x="64" y="561" width="2" height="1" fill="#000"/><rect x="64" y="587" width="2" height="1" fill="#000"/><rect x="64" y="613" width="2" height="1" fill="#000"/><rect x="64" y="639" width="2" height="1" fill="#000"/><rect x="64" y="666" width="2" height="1" fill="#000"/><path d="M66.5 596.5H67.5V596.5H68.5V596.5H69.5V590.5H70.5V587.5H71.5V590.5H72.5V589.5H73.5V589.5H74.5V587.5H75.5V587.5H76.5V588.5H77.5V588.5H78.5V588.5H79.5V589.5H80.5V588.5H81.5V590.5H82.5V590.5H83.5V587.5H84.5V587.5H85.5V588.5H86.5V590.5H87.5V590.5H88.5V590.5H89.5V589.5H90.5V588.5H91.5V590.5H92.5V589.5H93.5V589.5H94.5V588.5H95.5V588.5H96.5V588.5H97.5V588.5H98.5V589.5H99.5V589.5H100.5V588.5H101.5V590.5H102.5V590.5H103.5V588.5H104.5V588.5H105.5V588.5H106.5V588.5H107.5V588.5H108.5V587.5H109.5V587.5H110.5V587.5H111.5V587.5H112.5V589.5H113.5V589.5H114.5V588.5H115.5V588.5H116.5V589.5H117.5V589.5H118.5V588.5H119.5V587.5H120.5V587.5H121.5V589.5H122.5V589.5H123.5V589.5H124.5V588.5H125.5V588.5H126.5V588.5H127.5V588.5H128.5V589.5H129.5V587.5H130.5V586.5H131.5V587.5H132.5V587.5H133.5V587.5H134.5V587.5H135.5V585.5H136.5V585.5H137.5V585.5H138.5V586.5H139.5V586.5H140.5V588.5H141.5V587.5H142.5V586.5H143.5V586.5H144.5V586.5H145.5V586.5H146.5V586.5H147.5V586.5H148.5V586.5H149.5V585.5H150.5V586.5H151.5V586.5H152.5V585.5H153.5V584.5H154.5V585.5H155.5V585.5H156.5V585.5H157.5V586.5H158.5V586.5H159.5V585.5H160.5V584.5H161.5V584.5H162.5V584.5H163.5V584.5H164.5V584.5H165.5V583.5H166.5V582.5H167.5V582.5H168.5V582.5H169.5V582.5H170.5V580.5H171.5V582.5H172.5V581.5H173.5V581.5H174.5V582.5H175.5V581.5H176.5V580.5H177.5V581.5H178.5V581.5H179.5V581.5H180.5V579.5H181.5V579.5H182.5V580.5H183.5V579.5H184.5V579.5H185.5V577.5H186.5V577.5H187.5V577.5H188.5V576.5H189.5V576.5H190.5V576.5H191.5V576.5H192.5V576.5H193.5V575.5H194.5V574.5H195.5V574.5H196.5V573.5H197.5V573.5H198.5V573.5H199.5V572.5H200.5V572.5H201.5V571.5H202.5V570.5H203.5V568.5H204.5V567.5H205.5V567.5H206.5V566.5H207.5V564.5H208.5V563.5H209.5V562.5H210.5V561.5H211.5V560.5H212.5V558.5H213.5V556.5H214.5V554.5H215.5V553.5H216.5V550.5H217.5V547.5H218.5V545.5H219.5V542.5H220.5V537.5H221.5V530.5H222.5V523.5H223.5V514.5H224.5V503.5H225.5V474.5H226.5V456.5H227.5V463.5H228.5V470.5H229.5V497.5H230.5V513.5H231.5V523.5H232.5V531.5H233.5V536.5H234.5V541.5H235.5V546.5H236.5V549.5H237.5V551.5H238.5V554.5H239.5V557.5H240.5V559.5H241.5V561.5H242.5V562.5H243.5V564.5H244.5V565.5H245.5V567.5H246.5V568.5H247.5V570.5H248.5V571.5H249.5V572.5H250.5V572.5H251.5V573.5H252.5V573.5H253.5V575.5H254.5V575.5H255.5V575.5H256.5V576.5H257.5V577.5H258.5V577.5H259.5V577.5H260.5V577.5H261.5V578.5H262.5V579.5H263.5V579.5H264.5V580.5H265.5V580.5H266.5V581.5H267.5V582.5H268.5V582.5H269.5V580.5H270.5V580.5H271.5V580.5H272.5V582.5H273.5V582.5H274.5V582.5H275.5V582.5H276.5V584.5H277.5V584.5H278.5V583.5H279.5V583.5H280.5V584.5H281.5V582.5H282.5V584.5H283.5V584.5H284.5V585.5H285.5V586.5H286.5V585.5H287.5V585.5H288.5V586.5H289.5V586.5H290.5V585.5H291.5V585.5H292.5V586.5H293.5V586.5H294.5V586.5H295.5V586.5H296.5V588.5H297.5V587.5H298.5V587.5H299.5V587.5H300.5V587.5H301.5V587.5H302.5V587.5H303.5V586.5H304.5V586.5H305.5V586.5H306.5V586.5H307.5V586.5H308.5V586.5H309.5V587.5H310.5V587.5H311.5V587.5H312.5V588.5H313.5V588.5H314.5V588.5H315.5V588.5H316.5V588.5H317.5V588.5H318.5V587.5H319.5V587.5H320.5V587.5H321.5V587.5H322.5V587.5H323.5V587.5H324.5V588.5H325.5V589.5H326.5V589.5H327.5V589.5H328.5V588.5H329.5V588.5H330.5V590.5H331.5V590.5H332.5V589.5H333.5V590.5H334.5V590.5H335.5V588.5H336.5V587.5H337.5V587.5H338.5V587.5H339.5V589.5H340.5V588.5H341.5V589.5H342.5V589.5H343.5V589.5H344.5V588.5H345.5V588.5H346.5V589.5H347.5V590.5H348.5V590.5H349.5V589.5H350.5V590.5H351.5V590.5H352.5V591.5H353.5V591.5H354.5V590.5H355.5V590.5H356.5V589.5H357.5V589.5H358.5V589.5H359.5V589.5H360.5V591.5H361.5V590.5H362.5V591.5H363.5V589.5H364.5V589.5H365.5V589.5H366.5V591.5H367.5V591.5H368.5V591.5H369.5V589.5H370.5V589.5H371.5V588.5H372.5V591.5H373.5V591.5H374.5V591.5H375.5V591.5H376.5V589.5H377.5V589.5H378.5V588.5H379.5V589.5H380.5V588.5H381.5V591.5H382.5V591.5H383.5V591.5H384.5V589.5H385.5V589.5H386.5V590.5H387.5V590.5H388.5V591.5H389.5V591.5H390.5V591.5H391.5V590.5H392.5V590.5H393.5V591.5H394.5V591.5H395.5V590.5H396.5V590.5H397.5V589.5H398.5V589.5H399.5V589.5H400.5V591.5H401.5V591.5H402.5V590.5H403.5V590.5H404.5V590.5H405.5V590.5H406.5V590.5H407.5V589.5H408.5V589.5H409.5V589.5H410.5V590.5H411.5V589.5H412.5V589.5H413.5V589.5H414.5V590.5H415.5V590.5H416.5V590.5H417.5V589.5H418.5V589.5H419.5V590.5H420.5V589.5H421.5V590.5H422.5V590.5H423.5V590.5H424.5V590.5H425.5V590.5H426.5V589.5H427.5V589.5H428.5V589.5H429.5V590.5H430.5V590.5H431.5V590.5H432.5V590.5H433.5V590.5H434.5V588.5H435.5V588.5H436.5V590.5H437.5V590.5H438.5V591.5H439.5V591.5H440.5V589.5H441.5V589.5H442.5V590.5H443.5V588.5H444.5V590.5H445.5V590.5H446.5V590.5H447.5V590.5H448.5V590.5H449.5V590.5H450.5V589.5H451.5V589.5H452.5V591.5H453.5V591.5H454.5V590.5H455.5V590.5H456.5V590.5H457.5V590.5H458.5V590.5H459.5V589.5H460.5V589.5H461.5V589.5H462.5V588.5H463.5V588.5H464.5V588.5H465.5V589.5H466.5V589.5H467.5V589.5H468.5V589.5H469.5V590.5H470.5V590.5H471.5V590.5H472.5V590.5H473.5V590.5H474.5V591.5H475.5V588.5H476.5V588.5H477.5V589.5H478.5V589.5H479.5V588.5H480.5V590.5H481.5V591.5H482.5V591.5H483.5V590.5H484.5V591.5H485.5V591.5H486.5V590.5H487.5V591.5H488.5V591.5H489.5V589.5H490.5V592.5H491.5V592.5H492.5V590.5H493.5V590.5H494.5V591.5H495.5V591.5H496.5V591.5H497.5V591.5H498.5V591.5H499.5V591.5H500.5V591.5H501.5V591.5H502.5V591.5H503.5V591.5H504.5V591.5H505.5V591.5H506.5V590.5H507.5V591.5H508.5V590.5H509.5V590.5H510.5V591.5H511.5V590.5H512.5V590.5H513.5V590.5H514.5V590.5H515.5V591.5H516.5V591.5H517.5V590.5H518.5V590.5H519.5V590.5H520.5V590.5H521.5V591.5H522.5V591.5H523.5V591.5H524.5V591.5H525.5V590.5H526.5V590.5H527.5V590.5H528.5V591.5H529.5V591.5H530.5V590.5H531.5V591.5H532.5V591.5H533.5V591.5H534.5V591.5H535.5V591.5H536.5V589.5H537.5V590.5H538.5V590.5H539.5V591.5H540.5V591.5H541.5V590.5H542.5V590.5H543.5V591.5H544.5V591.5H545.5V590.5H546.5V592.5H547.5V590.5H548.5V590.5H549.5V591.5H550.5V591.5H551.5V589.5H552.5V589.5H553.5V589.5H554.5V591.5H555.5V591.5H556.5V591.5H557.5V590.5H558.5V592.5H559.5V592.5H560.5V590.5H561.5V590.5H562.5V590.5H563.5V592.5H564.5V592.5H565.5V591.5H566.5V591.5H567.5V591.5H568.5V591.5H569.5V591.5H570.5V591.5H571.5V591.5H572.5V592.5H573.5V592.5H574.5V592.5H575.5V590.5H576.5V592.5H577.5V592.5H578.5V592.5H579.5V591.5H580.5V591.5H581.5V591.5H582.5V592.5H583.5V592.5H584.5V592.5H585.5V592.5H586.5V592.5H587.5V592.5H588.5V592.5H589.5V590.5H590.5V589.5H591.5V590.5H592.5V590.5H593.5V590.5H594.5V591.5H595.5V591.5H596.5V591.5H597.5V592.5H598.5V589.5H599.5V589.5H600.5V589.5H601.5V592.5H602.5V592.5H603.5V592.5H604.5V590.5H605.5V590.5H606.5V591.5H607.5V591.5H608.5V592.5H609.5V592.5H610.5V590.5H611.5V590.5H612.5V590.5H613.5V592.5H614.5V591.5H615.5V590.5H616.5V590.5H617.5V590.5H618.5V590.5H619.5V590.5H620.5V591.5H621.5V591.5H622.5V591.5H623.5V591.5H624.5V591.5H625.5V591.5H626.5V591.5H627.5V592.5H628.5V592.5H629.5V592.5H630.5V590.5H631.5V592.5H632.5V591.5H633.5V591.5H634.5V591.5H635.5V592.5H636.5V589.5H637.5V589.5H638.5V589.5H639.5V589.5H640.5V591.5H641.5V591.5H642.5V591.5H643.5V590.5H644.5V590.5H645.5V590.5H646.5V590.5H647.5V590.5H648.5V590.5H649.5V591.5H650.5V592.5H651.5V591.5H652.5V591.5H653.5V591.5H654.5V592.5H655.5V591.5H656.5V591.5H657.5V591.5H658.5V591.5H659.5V590.5H660.5V590.5H661.5V591.5H662.5V591.5H663.5V590.5H664.5V592.5H665.5V590.5H666.5V590.5H667.5V590.5H668.5V592.5H669.5V591.5H670.5V592.5H671.5V592.5H672.5V592.5H673.5V592.5H674.5V590.5H675.5V590.5H676.5V590.5H677.5V591.5H678.5V591.5H679.5V591.5H680.5V591.5H681.5V590.5H682.5V591.5H683.5V591.5H684.5V591.5H685.5V591.5H686.5V591.5H687.5V591.5H688.5V591.5H689.5V591.5H690.5V590.5H691.5V590.5H692.5V591.5H693.5V591.5H694.5V591.5H695.5V591.5H696.5V591.5H697.5V591.5H698.5V590.5H699.5V590.5H700.5V590.5H701.5V589.5H702.5V589.5H703.5V589.5H704.5V591.5H705.5V591.5H706.5V591.5H707.5V591.5H708.5V592.5H709.5V591.5H710.5V591.5H711.5V591.5H712.5V591.5H713.5V589.5H714.5V589.5H715.5V589.5H716.5V591.5H717.5V591.5H718.5V591.5H719.5V590.5H720.5V590.5H721.5V590.5H722.5V591.5H723.5V589.5H724.5V590.5H725.5V590.5H726.5V590.5H727.5V591.5H728.5V589.5H729.5V590.5H730.5V590.5H731.5V591.5H732.5V590.5H733.5V590.5H734.5V588.5H735.5V588.5H736.5V589.5H737.5V590.5H738.5V590.5H739.5V590.5H740.5V590.5H741.5V590.5H742.5V590.5H743.5V589.5H744.5V590.5H745.5V590.5H746.5V590.5H747.5V589.5H748.5V589.5H749.5V589.5H750.5V589.5H751.5V589.5H752.5V589.5H753.5V590.5H754.5V590.5H755.5V589.5H756.5V589.5H757.5V590.5H758.5V590.5H759.5V590.5H760.5V591.5H761.5V589.5H762.5V589.5H763.5V591.5H764.5V590.5H765.5V590.5H766.5V591.5H767.5V588.5H768.5V588.5H769.5V588.5H770.5V590.5H771.5V590.5H772.5V590.5H773.5V590.5H774.5V590.5H775.5V591.5H776.5V590.5H777.5V590.5H778.5V590.5H779.5V591.5H780.5V589.5H781.5V589.5H782.5V589.5H783.5V591.5H784.5V591.5H785.5V589.5H786.5V590.5H787.5V590.5H788.5V590.5H789.5V590.5H790.5V590.5H791.5V590.5H792.5V589.5H793.5V590.5H794.5V590.5H795.5V590.5H796.5V590.5H797.5V590.5H798.5V590.5H799.5V589.5H800.5V589.5H801.5V591.5H802.5V591.5H803.5V590.5H804.5V589.5H805.5V589.5H806.5V591.5H807.5V591.5H808.5V591.5H809.5V589.5H810.5V589.5H811.5V589.5H812.5V590.5H813.5V591.5H814.5V588.5H815.5V589.5H816.5V589.5H817.5V588.5H818.5V588.5H819.5V588.5H820.5V590.5H821.5V590.5H822.5V590.5H823.5V590.5H824.5V590.5H825.5V590.5H826.5V589.5H827.5V589.5H828.5V591.5H829.5V591.5H830.5V589.5H831.5V589.5H832.5V590.5H833.5V591.5H834.5V588.5H835.5V588.5H836.5V590.5H837.5V590.5H838.5V590.5H839.5V589.5H840.5V589.5H841.5V591.5H842.5V591.5H843.5V588.5H844.5V588.5H845.5V590.5H846.5V588.5H847.5V590.5H848.5V590.5H849.5V590.5H850.5V590.5H851.5V590.5H852.5V590.5H853.5V589.5H854.5V589.5H855.5V588.5H856.5V588.5H857.5V588.5H858.5V590.5H859.5V590.5H860.5V590.5H861.5V590.5H862.5V590.5H863.5V588.5H864.5V591.5H865.5V589.5H866.5V589.5H867.5V589.5H868.5V589.5H869.5V590.5H870.5V590.5H871.5V589.5H872.5V589.5H873.5V590.5H874.5V590.5H875.5V589.5H876.5V590.5H877.5V590.5H878.5V588.5H879.5V588.5H880.5V588.5H881.5V588.5H882.5V587.5H883.5V587.5H884.5V587.5H885.5V588.5H886.5V588.5H887.5V587.5H888.5V587.5H889.5V587.5H890.5V587.5H891.5V589.5H892.5V589.5H893.5V589.5H894.5V589.5H895.5V589.5H896.5V588.5H897.5V588.5H898.5V588.5H899.5V590.5H900.5V590.5H901.5V590.5H902.5V589.5H903.5V589.5H904.5V589.5H905.5V589.5H906.5V589.5H907.5V589.5H908.5V589.5H909.5V587.5H910.5V586.5H911.5V588.5H912.5V588.5H913.5V587.5H914.5V585.5H915.5V584.5" fill="none" stroke="#0000ff" stroke-width="1"/><rect x="124" y="575" width="2" height="14" fill="#0000ff"/><rect x="162" y="574" width="2" height="11" fill="#0000ff"/><rect x="178" y="571" width="2" height="11" fill="#0000ff"/><rect x="270" y="576" width="1" height="5" fill="#0000ff"/><rect x="275" y="557" width="2" height="28" fill="#0000ff"/><rect x="281" y="575" width="2" height="10" fill="#0000ff"/><rect x="383" y="543" width="2" height="49" fill="#0000ff"/><rect x="418" y="551" width="2" height="40" fill="#0000ff"/><rect x="432" y="583" width="2" height="8" fill="#0000ff"/><rect x="443" y="567" width="2" height="24" fill="#0000ff"/><rect x="498" y="559" width="2" height="33" fill="#0000ff"/><rect x="527" y="587" width="1" height="4" fill="#0000ff"/><rect x="533" y="507" width="2" height="85" fill="#0000ff"/><rect x="573" y="586" width="2" height="7" fill="#0000ff"/><rect x="589" y="577" width="2" height="14" fill="#0000ff"/><rect x="611" y="583" width="1" height="8" fill="#0000ff"/><rect x="611" y="577" width="2" height="14" fill="#0000ff"/><rect x="620" y="587" width="1" height="5" fill="#0000ff"/><rect x="621" y="579" width="2" height="13" fill="#0000ff"/><rect x="655" y="541" width="2" height="51" fill="#0000ff"/><rect x="666" y="567" width="2" height="24" fill="#0000ff"/><rect x="681" y="587" width="1" height="4" fill="#0000ff"/><rect x="685" y="564" width="2" height="28" fill="#0000ff"/><rect x="711" y="585" width="2" height="7" fill="#0000ff"/><rect x="713" y="507" width="2" height="83" fill="#0000ff"/><rect x="730" y="557" width="2" height="35" fill="#0000ff"/><rect x="740" y="573" width="2" height="18" fill="#0000ff"/><rect x="747" y="565" width="2" height="25" fill="#0000ff"/><rect x="765" y="585" width="1" height="6" fill="#0000ff"/><rect x="766" y="565" width="2" height="27" fill="#0000ff"/><rect x="769" y="583" width="1" height="6" fill="#0000ff"/><rect x="774" y="551" width="2" height="41" fill="#0000ff"/><rect x="787" y="550" width="2" height="41" fill="#0000ff"/><rect x="792" y="584" width="2" height="7" fill="#0000ff"/><rect x="798" y="570" width="2" height="21" fill="#0000ff"/><rect x="801" y="580" width="2" height="12" fill="#0000ff"/><rect x="805" y="583" width="1" height="7" fill="#0000ff"/><rect x="805" y="582" width="2" height="10" fill="#0000ff"/><rect x="830" y="584" width="2" height="6" fill="#0000ff"/><rect x="833" y="573" width="2" height="19" fill="#0000ff"/><rect x="836" y="548" width="1" height="43" fill="#0000ff"/><rect x="837" y="548" width="1" height="43" fill="#0000ff"/><rect x="838" y="572" width="1" height="19" fill="#0000ff"/><rect x="839" y="572" width="2" height="18" fill="#0000ff"/><rect x="841" y="536" width="2" height="56" fill="#0000ff"/><rect x="850" y="580" width="2" height="11" fill="#0000ff"/><rect x="888" y="576" width="2" height="12" fill="#0000ff"/><rect x="899" y="532" width="2" height="59" fill="#0000ff"/><rect x="226" y="209" width="2" height="253" fill="#0000ff"/><rect x="837" y="549" width="1" height="36" fill="#ffffdc"/><rect x="838" y="549" width="1" height="37" fill="#0000ff"/></svg>
<div class="yl" style="top:163px">10.0</div>
<div class="yl" style="top:189px">0.0</div>
<div class="yl" style="top:215px">-10.0</div>
<div class="yl" style="top:241px">-20.0</div>
<div class="yl" style="top:267px">-30.0</div>
<div class="yl" style="top:294px">-40.0</div>
<div class="yl" style="top:320px">-50.0</div>
<div class="yl" style="top:346px">-60.0</div>
<div class="yl" style="top:372px">-70.0</div>
<div class="yl" style="top:398px">-80.0</div>
<div class="yl" style="top:425px">-90.0</div>
<div class="yl" style="top:451px">-100.0</div>
<div class="yl" style="top:477px">-110.0</div>
<div class="yl" style="top:503px">-120.0</div>
<div class="yl" style="top:529px">-130.0</div>
<div class="yl" style="top:556px">-140.0</div>
<div class="yl" style="top:582px">-150.0</div>
<div class="yl" style="top:608px">-160.0</div>
<div class="yl" style="top:634px">-170.0</div>
<div class="yl" style="top:661px">-180.0</div>
<div class="xl" style="left:94px">8.0k</div>
<div class="xl" style="left:146px">9.0k</div>
<div class="xl" style="left:193px">10.0k</div>
<div class="xl" style="left:501px">20.0k</div>
<div class="xl" style="left:680px">30.0k</div>
<div class="xl" style="left:808px">40.0k</div>
<div class="t" style="left:471px;top:694.5px;font-size:12px;letter-spacing:-0.049px;font-family:'Liberation Sans',sans-serif;color:#000;">Frequency (Hz)</div>
<div class="t" style="left:-9px;top:417px;width:50px;text-align:center;font-size:13px;transform:rotate(-90deg);letter-spacing:0.25px">dBV rms</div>
<div class="a" style="left:66px;top:666px;width:850px;height:12px;background:#ece9d8;background-image:linear-gradient(45deg,#fff 25%,transparent 25%,transparent 75%,#fff 75%),linear-gradient(45deg,#fff 25%,transparent 25%,transparent 75%,#fff 75%);background-size:2px 2px;background-position:0 0,1px 1px"></div>
<div class="a" style="left:66px;top:666px;width:17px;height:12px;background:#ece9d8;border:1px solid;border-color:#fff #716f64 #716f64 #fff;box-shadow:inset -1px -1px 0 #aca899"><div class="a" style="left:4px;top:2px;border:3px solid transparent;border-right:4px solid #000;border-left:0"></div></div>
<div class="a" style="left:882px;top:666px;width:17px;height:12px;background:#ece9d8;border:1px solid;border-color:#fff #716f64 #716f64 #fff;box-shadow:inset -1px -1px 0 #aca899"></div>
<div class="a" style="left:899px;top:666px;width:17px;height:12px;background:#ece9d8;border:1px solid;border-color:#fff #716f64 #716f64 #fff;box-shadow:inset -1px -1px 0 #aca899"><div class="a" style="left:6px;top:2px;border:3px solid transparent;border-left:4px solid #000;border-right:0"></div></div>
<div class="t" style="left:887px;top:168px;font-family:'Liberation Serif',serif;font-style:italic;font-weight:bold;font-size:25px;color:#a8a8a8">S</div>
<div class="t" style="left:901px;top:176px;font-family:'Liberation Serif',serif;font-style:italic;font-size:16px;color:#a8a8a8">+</div>
<div class="t" style="left:944.5px;top:154px;font-size:13px;letter-spacing:0.000px;font-family:'Liberation Sans',sans-serif;color:#000;transform:scaleX(0.8969);transform-origin:0 0;text-decoration:underline;">Overlays</div>
<div class="t" style="left:919px;top:171px;width:22px;text-align:center;font-size:13px;transform:rotate(-90deg)">Set</div>
<div class="t" style="left:935px;top:172px;width:22px;text-align:center;font-size:13px;transform:rotate(-90deg)">On</div>
<div class="sb" style="top:189px">1</div>
<div class="cb" style="top:190px"></div>
<div class="t" style="left:956.5px;top:190px;font-size:13px;letter-spacing:0.000px;font-family:'Liberation Sans',sans-serif;color:#008000;transform:scaleX(0.8718);transform-origin:0 0;">Overlay 1</div>
<div class="sb" style="top:205px">2</div>
<div class="cb" style="top:206px"></div>
<div class="t" style="left:956.5px;top:206px;font-size:13px;letter-spacing:0.000px;font-family:'Liberation Sans',sans-serif;color:#00a0a0;transform:scaleX(0.8718);transform-origin:0 0;">Overlay 2</div>
<div class="sb" style="top:221px">3</div>
<div class="cb" style="top:222px"></div>
<div class="t" style="left:956.5px;top:222px;font-size:13px;letter-spacing:0.000px;font-family:'Liberation Sans',sans-serif;color:#800080;transform:scaleX(0.8718);transform-origin:0 0;">Overlay 3</div>
<div class="sb" style="top:237px">4</div>
<div class="cb" style="top:238px"></div>
<div class="t" style="left:956.5px;top:238px;font-size:13px;letter-spacing:0.000px;font-family:'Liberation Sans',sans-serif;color:#ff00ff;transform:scaleX(0.8718);transform-origin:0 0;">Overlay 4</div>
<div class="sb" style="top:253px">5</div>
<div class="cb" style="top:254px"></div>
<div class="t" style="left:956.5px;top:254px;font-size:13px;letter-spacing:0.000px;font-family:'Liberation Sans',sans-serif;color:#804000;transform:scaleX(0.8718);transform-origin:0 0;">Overlay 5</div>
<div class="sb" style="top:269px">6</div>
<div class="cb" style="top:270px"></div>
<div class="t" style="left:956.5px;top:270px;font-size:13px;letter-spacing:0.000px;font-family:'Liberation Sans',sans-serif;color:#ff8040;transform:scaleX(0.8718);transform-origin:0 0;">Overlay 6</div>
<div class="sb" style="top:285px">C</div>
<div class="cb" style="top:286px"></div>
<div class="t" style="left:956.5px;top:286px;font-size:13px;letter-spacing:-0.237px;font-family:'Liberation Sans',sans-serif;color:#000;">Composite</div>
<div class="a" style="left:920px;top:302px;width:64px;height:18px;border:1px solid;border-color:#fff #716f64 #716f64 #fff;box-shadow:inset -1px -1px 0 #aca899"></div>
<div class="t" style="left:926px;top:304px;font-size:13px;letter-spacing:-0.364px;font-family:'Liberation Sans',sans-serif;color:#000;">Options...</div>
<div class="mini" style="left:932px;top:696px"><div class="a" style="left:2px;top:4px;width:5px;height:1px;background:#000"></div><div class="a" style="left:4px;top:2px;width:1px;height:5px;background:#000"></div></div>
<div class="mini" style="left:1008px;top:696px"><div class="a" style="left:2px;top:4px;width:4px;height:1px;background:#000"></div></div>
<div class="a" style="left:2px;top:709px;width:1020px;height:2px;background:#fff"></div>
<div class="a" style="left:293px;top:197px;width:219px;height:74px;background:#6d83da;border:1px solid #5a6fd0;box-shadow:inset 1px 1px 0 #8fa2ec,inset -1px -1px 0 #5468c8"></div><div class="a" style="left:295px;top:199px;width:215px;height:19px;background:linear-gradient(to bottom,#6c80d8 0,#7088e0 30%,#7e98e8 60%,#86a0ec 100%)"></div><div class="t" style="left:297px;top:204px;font-size:12px;letter-spacing:0.000px;font-family:'Liberation Sans',sans-serif;color:#d9def7;transform:scaleX(0.8921);transform-origin:0 0;font-weight:bold;">THD</div><div class="a" style="left:493px;top:203px;width:13px;height:13px;background:#b86a8c;border:1px solid #e8d0dc;border-radius:2px"><svg class="a" style="left:0;top:0" width="11" height="11"><path d="M2.500 2.500l6 6M8.500 2.500l-6 6" stroke="#fff" stroke-width="1.800"/></svg></div><div class="a" style="left:297px;top:219px;width:211px;height:48px;background:#fff;border-top:1px solid #000;border-left:1px solid #000"></div><div class="t" style="left:300px;top:226px;font-size:39px;letter-spacing:0.000px;font-family:'Liberation Sans',sans-serif;color:#000;transform:scaleX(0.9655);transform-origin:0 0;">0.000296 %</div>
<div class="a" style="left:553px;top:196px;width:203px;height:74px;background:#6d83da;border:1px solid #5a6fd0;box-shadow:inset 1px 1px 0 #8fa2ec,inset -1px -1px 0 #5468c8"></div><div class="a" style="left:555px;top:198px;width:199px;height:19px;background:linear-gradient(to bottom,#6c80d8 0,#7088e0 30%,#7e98e8 60%,#86a0ec 100%)"></div><div class="t" style="left:557px;top:203px;font-size:12px;letter-spacing:-0.113px;font-family:'Liberation Sans',sans-serif;color:#d9def7;font-weight:bold;">Peak Amplitude</div><div class="a" style="left:737px;top:202px;width:13px;height:13px;background:#b86a8c;border:1px solid #e8d0dc;border-radius:2px"><svg class="a" style="left:0;top:0" width="11" height="11"><path d="M2.500 2.500l6 6M8.500 2.500l-6 6" stroke="#fff" stroke-width="1.800"/></svg></div><div class="a" style="left:557px;top:218px;width:195px;height:48px;background:#fff;border-top:1px solid #000;border-left:1px solid #000"></div><div class="t" style="left:571px;top:225px;font-size:39px;letter-spacing:-0.383px;font-family:'Liberation Sans',sans-serif;color:#000;">-5.44 dBV</div>
<div class="t" style="left:343px;top:328px;font-size:20px;letter-spacing:0.513px;font-family:'Liberation Sans',sans-serif;color:#000;">AD8065+BUF634</div>
<div class="t" style="left:343px;top:352px;font-size:20px;letter-spacing:0.256px;font-family:'Liberation Sans',sans-serif;color:#000;">Uвых = 2V</div>
<div class="t" style="left:343px;top:375px;font-size:20px;letter-spacing:0.270px;font-family:'Liberation Sans',sans-serif;color:#000;">Rн = 82 Om</div>
<div class="st" style="left:5px;width:119px">Stopped</div>
<div class="st" style="left:125px;width:101px">Real Time</div>
<div class="st" style="left:228px;width:71px">96000 Hz</div>
<div class="st" style="left:301px;width:51px">24 Bit</div>
<div class="st" style="left:354px;width:52px">Stereo</div>
<div class="st" style="left:407px;width:101px">FFT 524288 pts</div>
<div class="st" style="left:510px;width:74px">Hanning</div>
<div class="st" style="left:586px;width:435px"></div>
<div class="a" style="left:0;top:738px;width:1024px;height:30px;background:linear-gradient(to bottom,#1f5fd8 0,#3c86f0 6%,#3a7ff0 12%,#2a68e2 20%,#245edc 35%,#235bd8 70%,#2159d4 88%,#1c49b8 100%)"></div>
<div class="a" style="left:0;top:738px;width:96px;height:30px;border-radius:0 12px 12px 0/0 15px 15px 0;background:linear-gradient(to bottom,#2f7a30 0,#4aa84a 10%,#45a445 20%,#3c9a3c 45%,#3a9639 70%,#338a33 88%,#2a742a 100%);box-shadow:inset -3px 0 4px -1px #2a6e2a,inset 2px 0 3px -1px #2d7a2d"></div>
<svg class="a" style="left:10px;top:743px" width="20" height="20" viewBox="0 0 20 20"><path d="M2 3.500q3.500-2 7 0l-1.200 6.500q-3.500-2-7 0z" fill="#e8542c"/><path d="M10.500 4q3.500 2 7 0l-1.200 6.500q-3.500 2-7 0z" fill="#7cc043"/><path d="M.8 11.500q3.500-2 7 0l-1.200 6.500q-3.500-2-7 0z" fill="#4a7fe0"/><path d="M9 12q3.500 2 7 0l-1.200 6.500q-3.500 2-7 0z" fill="#f5c02c"/></svg>
<div class="t" style="left:35px;top:744px;font-size:19px;letter-spacing:0.000px;font-family:'Liberation Sans',sans-serif;color:#fff;transform:scaleX(0.8851);transform-origin:0 0;font-weight:bold;font-style:italic;text-shadow:1px 1px 1px #1d4d1d;">пуск</div>
<div class="a" style="left:105px;top:742px;width:160px;height:23px;border-radius:3px;background:#1e52b7;box-shadow:inset 1px 1px 1px #153f94,inset -1px -1px 0 #2a62cc"></div>
<svg class="a" style="left:116px;top:746px" width="16" height="16" viewBox="0 0 16 16" shape-rendering="crispEdges"><rect width="16" height="16" fill="#3c3a30"/><rect x="1" y="1" width="14" height="14" fill="#d0d0d0"/><rect x="2" y="2" width="2" height="2" fill="#fff"/><rect x="2" y="5" width="2" height="2" fill="#fff"/><rect x="2" y="8" width="2" height="2" fill="#fff"/><rect x="2" y="11" width="2" height="2" fill="#fff"/><rect x="2" y="13" width="2" height="2" fill="#fff"/><rect x="5" y="2" width="2" height="2" fill="#fff"/><rect x="5" y="5" width="2" height="2" fill="#fff"/><rect x="5" y="8" width="2" height="2" fill="#fff"/><rect x="5" y="11" width="2" height="2" fill="#fff"/><rect x="5" y="13" width="2" height="2" fill="#fff"/><rect x="8" y="2" width="2" height="2" fill="#fff"/><rect x="8" y="5" width="2" height="2" fill="#fff"/><rect x="8" y="8" width="2" height="2" fill="#fff"/><rect x="8" y="11" width="2" height="2" fill="#fff"/><rect x="8" y="13" width="2" height="2" fill="#fff"/><rect x="11" y="2" width="2" height="2" fill="#fff"/><rect x="11" y="5" width="2" height="2" fill="#fff"/><rect x="11" y="8" width="2" height="2" fill="#fff"/><rect x="11" y="11" width="2" height="2" fill="#fff"/><rect x="11" y="13" width="2" height="2" fill="#fff"/><rect x="13" y="2" width="2" height="2" fill="#fff"/><rect x="13" y="5" width="2" height="2" fill="#fff"/><rect x="13" y="8" width="2" height="2" fill="#fff"/><rect x="13" y="11" width="2" height="2" fill="#fff"/><rect x="13" y="13" width="2" height="2" fill="#fff"/><polyline points="1.500,3 5,2.500 6,4 8,3.500 9.500,2 11,4 12.500,3.500 14,7" fill="none" stroke="#f03040" stroke-width="1.200" shape-rendering="auto"/><polyline points="1.500,3.500 4,3.500 5,5 7,4.500 8,6 10,5 11,3 12.500,7 14,10" fill="none" stroke="#2030f0" stroke-width="1.300" shape-rendering="auto"/><text x="2.800" y="14.300" font-family="Liberation Serif" font-style="italic" font-weight="bold" font-size="8.500" fill="#000" shape-rendering="auto" textLength="10.500" lengthAdjust="spacingAndGlyphs">SC</text></svg>
<div class="t" style="left:135.5px;top:747px;font-size:11px;letter-spacing:-0.304px;font-family:'Liberation Sans',sans-serif;color:#fff;">SpectraPLUS-SC Sou...</div>
<div class="a" style="left:266px;top:742px;width:159px;height:23px;border-radius:3px;background:linear-gradient(to bottom,#5a9bf8 0,#3d82f3 12%,#3a7ef0 80%,#3070e0 100%);box-shadow:inset 1px 1px 0 #6aa6fa,inset -1px -1px 0 #2a62d0"></div>
<svg class="a" style="left:276px;top:745px" width="16" height="18" viewBox="0 0 16 18"><path d="M3 8h10l-1.500 9h-7z" fill="#d8d8e0" stroke="#808090" stroke-width=".6"/><path d="M4 2l2 7M12 1l-3 8M8 0v8" stroke="#e06020" stroke-width="1.600"/><path d="M5.500 3l1.500 6" stroke="#3a9a3a" stroke-width="1.400"/><path d="M11 3l-2 6" stroke="#e0c020" stroke-width="1.200"/></svg>
<div class="t" style="left:295px;top:747px;font-size:11px;letter-spacing:0.252px;font-family:'Liberation Sans',sans-serif;color:#fff;">8065+634-3v-10кГц....</div>
<div class="a" style="left:802px;top:745px;width:17px;height:16px;background:#3c6cd0"></div>
<div class="t" style="left:804px;top:747px;font-size:11px;letter-spacing:0.000px;font-family:'Liberation Sans',sans-serif;color:#fff;transform:scaleX(0.8183);transform-origin:0 0;">RU</div>
<svg class="a" style="left:824px;top:744px" width="18" height="18" viewBox="0 0 18 18" shape-rendering="crispEdges"><path d="M4 2.500h2v1h2v-1h2v1h2v2" fill="none" stroke="#000"/><rect x="1.500" y="6.500" width="15" height="9" fill="#fff" stroke="#000"/><path d="M3 8.500h12M3 10.500h12M3 12.500h12" stroke="#000" stroke-dasharray="1 1"/><rect x="5" y="13" width="8" height="1" fill="#000"/></svg>
<div class="a" style="left:860px;top:738px;width:164px;height:30px;background:linear-gradient(to bottom,#0c5fcb 0,#1a9af2 8%,#1898f0 14%,#1290e8 30%,#0f8be6 70%,#0e86e0 88%,#0b6cc8 100%);border-left:1px solid #0a3f9e;box-shadow:inset 1px 0 0 #3aa8f8"></div>
<svg class="a" style="left:860px;top:738px" width="128" height="30" viewBox="0 0 128 30"><rect x="15" y="7.500" width="8" height="7" fill="#34347a" stroke="#8a8ab8" stroke-width="1"/><rect x="11" y="11" width="8" height="7" fill="#3c3c88" stroke="#9a9ac8" stroke-width="1"/><rect x="12" y="19" width="6" height="2" fill="#b8b8d8"/><ellipse cx="13" cy="20.500" rx="3" ry="1.500" fill="#c8c8e0"/><path d="M18 15l7 7M25 15l-7 7" stroke="#e82828" stroke-width="2.200" stroke-linecap="round"/><circle cx="36" cy="14.500" r="6" fill="none" stroke="#0a0a10" stroke-width="3.200"/><circle cx="36" cy="14.500" r="3.600" fill="none" stroke="#18b8f0" stroke-width="1.600"/><circle cx="39.500" cy="19" r="4.400" fill="#e83038"/><rect x="38.900" y="16.200" width="1.300" height="3.600" fill="#fff"/><rect x="38.900" y="20.600" width="1.300" height="1.300" fill="#fff"/><ellipse cx="52" cy="13" rx="5.500" ry="6.500" fill="#8c8c90" stroke="#4a4a50" stroke-width="1" transform="rotate(-20 52 13)"/><ellipse cx="51" cy="12.500" rx="3" ry="3.800" fill="#5a5a60" transform="rotate(-20 51 12.500)"/><ellipse cx="50.500" cy="12" rx="1.300" ry="1.800" fill="#b0b0b8"/><path d="M55 22q4-1 7-6M56 20q3-1 5-4" stroke="#8aa0f0" stroke-width=".9" fill="none"/><rect x="67" y="15" width="10" height="6" rx="1" fill="#8a8a94" stroke="#3a3a44" stroke-width=".9" transform="rotate(-22 72 18)"/><rect x="69.500" y="16.500" width="5" height="2.500" fill="#c8c8e8" transform="rotate(-22 72 18)"/><path d="M65.500 10.500l4-3.500v2h5.500v3.500h-2.500v3.500l-3-3v-1.500z" fill="#38c038" stroke="#187018" stroke-width=".7"/><circle cx="90" cy="14.400" r="8" fill="#189858"/><rect x="85.500" y="16" width="1.700" height="2.600" fill="#d8f4e4"/><rect x="88.400" y="14" width="1.700" height="4.600" fill="#d8f4e4"/><rect x="91.300" y="11.500" width="1.700" height="5" fill="#a8e0c0"/><circle cx="94" cy="19.500" r="3.800" fill="#6a1a9a"/><circle cx="94" cy="19.500" r="1.400" fill="#fff"/><path d="M101 7h4.500v6.500l5-6.500h4.500l-11 13h-3z" fill="#e62030"/><path d="M105.500 7h5l-5 6.500z" fill="#f8e8e8"/><path d="M110 13.500l5.500 9h-11z" fill="#f8c818" stroke="#a87800" stroke-width=".7" stroke-linejoin="round"/><rect x="109.400" y="16.300" width="1.300" height="3.300" fill="#000"/><rect x="109.400" y="20.200" width="1.300" height="1.200" fill="#000"/></svg>
<div class="t" style="left:984px;top:747px;font-size:11px;letter-spacing:-0.105px;font-family:'Liberation Sans',sans-serif;color:#fff;">16:48</div>
</body></html>
